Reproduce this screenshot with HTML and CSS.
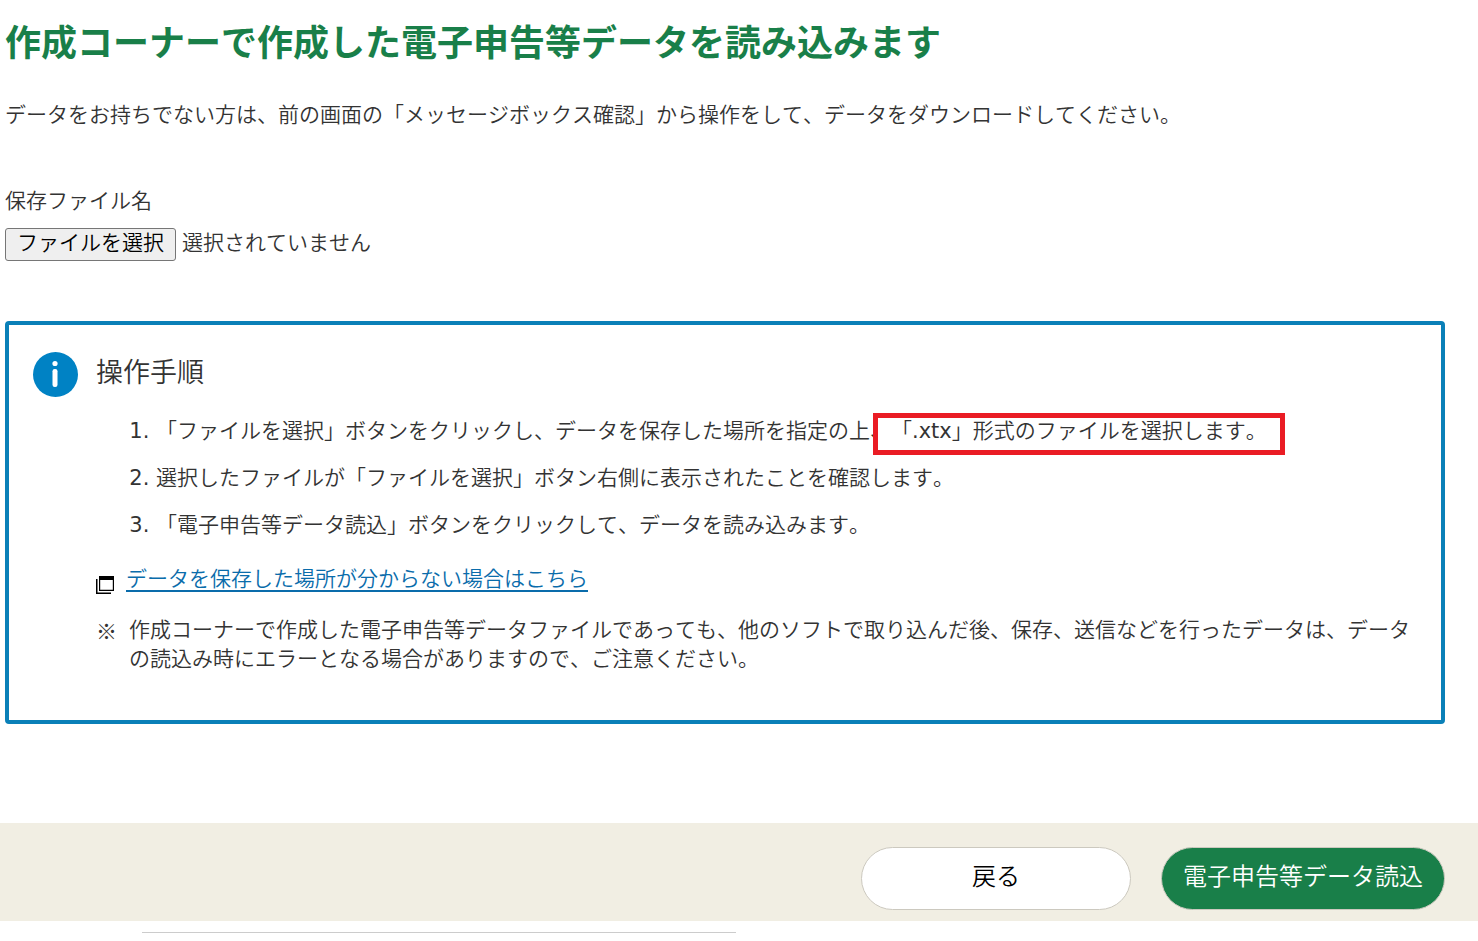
FILE: index.html
```html
<!DOCTYPE html>
<html lang="ja">
<head>
    <meta charset="UTF-8">
    <meta name="viewport" content="width=device-width, initial-scale=1.0">
    <title>電子申告等データ読込</title>
    <link rel="stylesheet" href="styles.css">
</head>
<body>

    <main class="contents">
        <h1>作成コーナーで作成した電子申告等データを読み込みます</h1>
        <p class="lead">データをお持ちでない方は、前の画面の「メッセージボックス確認」から操作をして、データをダウンロードしてください。</p>

        <form id="readForm" class="file-form">
            <label for="saveFile">保存ファイル名</label>
            <div class="file-row">
                <input type="file" id="saveFile" class="file-input" accept=".xtx" tabindex="-1">
                <button type="button" id="fileButton" class="file-button">ファイルを選択</button>
                <span id="fileName" class="file-name">選択されていません</span>
            </div>
        </form>

        <section class="info">
            <svg class="info-icon" viewBox="0 0 45 45" aria-hidden="true">
                <circle cx="22.5" cy="22.5" r="22.5" fill="#0082c4"/>
                <circle cx="22" cy="11.5" r="2.6" fill="#fff"/>
                <rect x="19.5" y="17" width="5" height="18" rx="2.2" fill="#fff"/>
            </svg>
            <div class="info-body">
                <h2>操作手順</h2>
                <ol class="steps">
                    <li>「ファイルを選択」ボタンをクリックし、データを保存した場所を指定の上、<span class="mark">「<span class="ext">.xtx</span>」形式のファイルを選択します。</span></li>
                    <li>選択したファイルが「ファイルを選択」ボタン右側に表示されたことを確認します。</li>
                    <li>「電子申告等データ読込」ボタンをクリックして、データを読み込みます。</li>
                </ol>
                <div class="help">
                    <svg class="window-icon" viewBox="0 0 18 18" aria-hidden="true">
                        <path d="M0 3h1.5v13.5H15V18H0z" fill="#000"/>
                        <path d="M3 0h15v15H3zM4.2 4v9.8h12.6V4z" fill="#000" fill-rule="evenodd"/>
                    </svg>
                    <a href="#">データを保存した場所が分からない場合はこちら</a>
                </div>
                <div class="note">
                    <span class="note-mark">※</span>
                    <p>作成コーナーで作成した電子申告等データファイルであっても、他のソフトで取り込んだ後、保存、送信などを行ったデータは、データの読込み時にエラーとなる場合がありますので、ご注意ください。</p>
                </div>
            </div>
        </section>
    </main>

    <div class="buttons">
        <button type="button" class="btn btn-back">戻る</button>
        <button type="submit" form="readForm" class="btn btn-read">電子申告等データ読込</button>
    </div>
    <hr class="line">

    <script>
        var saveFile = document.getElementById("saveFile");

        document.getElementById("fileButton").onclick = function () {
            saveFile.click();
        };

        // 選択したファイル名を表示
        saveFile.onchange = function () {
            var name = saveFile.files.length ? saveFile.files[0].name : "選択されていません";
            document.getElementById("fileName").innerText = name;
        };
    </script>
</body>
</html>
```
FILE: styles.css
```css
* {
    box-sizing: border-box;
}

body {
    margin: 0;
    background-color: #fff;
    color: #333;
    font-family: "DejaVu Sans", "Noto Sans CJK JP", sans-serif;
    font-size: 21px;
    font-weight: 350;
    font-kerning: none;
    line-height: 29px;
    text-spacing-trim: space-all;
}

h1, h2, p, ol {
    margin: 0;
    padding: 0;
}

.contents {
    padding: 17px 33px 99px 5px;
}

h1 {
    color: #197f49;
    font-size: 36px;
    font-weight: bold;
    line-height: 54px;
}

.lead {
    margin-top: 30px;
}

.file-form {
    margin-top: 57px;
}

.file-form label {
    display: block;
}

.file-row {
    display: flex;
    align-items: center;
    gap: 6px;
    margin-top: 12px;
}

/* ボタンから開くので入力欄は見せない */
.file-input {
    position: absolute;
    width: 1px;
    height: 1px;
    opacity: 0;
}

.file-button {
    height: 33px;
    padding: 0 11px 5px;
    border: 1px solid #767676;
    border-radius: 3px;
    background-color: #efefef;
    color: #000;
    font: inherit;
    cursor: pointer;
}

.file-name {
    padding-bottom: 2px;
}

.info {
    display: flex;
    align-items: flex-start;
    gap: 18px;
    margin-top: 60px;
    padding: 27px 24px 46px;
    border: 4px solid #0a80b8;
    border-radius: 4px;
}

.info-icon {
    flex: none;
    width: 45px;
    height: 45px;
}

.info-body {
    flex: 1;
}

h2 {
    font-size: 27px;
    font-weight: 350;
    line-height: 42px;
}

.steps {
    margin-top: 23px;
    padding-left: 60px;
}

.steps li {
    margin-bottom: 18px;
}

.steps li::marker,
.ext {
    font-weight: 400;
}

.mark {
    position: relative;
}

/* 赤枠 */
.mark::before {
    content: "";
    position: absolute;
    top: -6px;
    right: -18px;
    bottom: -12px;
    left: -18px;
    border: 5px solid #ea1c24;
}

.help {
    display: flex;
    align-items: flex-end;
    gap: 12px;
    margin-top: 25px;
}

.window-icon {
    width: 18px;
    height: 18px;
}

a {
    color: #0a6cab;
    text-underline-offset: 4px;
    text-decoration-thickness: 2px;
}

.note {
    display: flex;
    gap: 12px;
    margin-top: 22px;
}

.note-mark {
    font-family: "Noto Sans CJK JP", sans-serif;
}

.buttons {
    display: flex;
    justify-content: flex-end;
    gap: 30px;
    padding: 24px 33px 11px;
    background-color: #f1eee3;
}

.btn {
    height: 63px;
    padding: 0 21px 3px;
    border: 1px solid #ccc9bf;
    border-radius: 32px;
    font: inherit;
    font-size: 24px;
    cursor: pointer;
}

.btn-back {
    width: 270px;
    background-color: #fff;
    color: #000;
}

.btn-read {
    background-color: #197f49;
    color: #fff;
}

.line {
    width: 594px;
    max-width: 50%;
    margin: 11px 0 8px 142px;
    border: 0;
    border-top: 1px solid #ccc;
}
```
